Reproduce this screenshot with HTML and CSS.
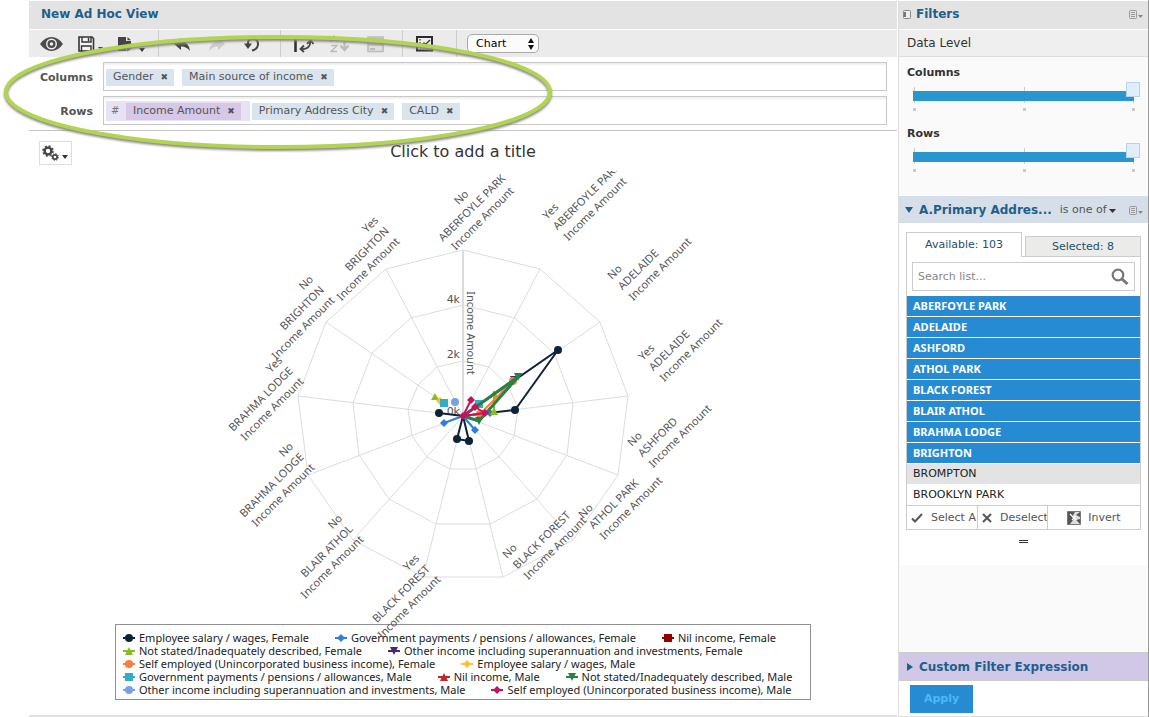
FILE: index.html
```html
<!DOCTYPE html>
<html lang="en">
<head>
<meta charset="utf-8">
<title>New Ad Hoc View</title>
<link rel="stylesheet" href="styles.css">
</head>
<body>
<div class="app">
  <main class="view">
    <h1 class="bar view-title">New Ad Hoc View</h1>
    <div class="toolbar">
      <div class="tools tools-file">
        <button type="button" aria-label="Preview"><svg width="23" height="18" viewBox="0 0 23 18"><path d="M0 9Q5 2 11.500 2T23 9Q18 16 11.500 16T0 9Z" fill="#4a4a4a"/><circle cx="11.500" cy="9" r="5.500" fill="#ededed"/><circle cx="11.500" cy="9" r="4" fill="#4a4a4a"/><circle cx="11.500" cy="9" r="1.800" fill="#ededed"/></svg></button>
        <button type="button" aria-label="Save"><svg width="25" height="18" viewBox="0 0 25 18"><path d="M1 2H14L15.500 3.500V16H1Z" fill="#f4f4f4" stroke="#333" stroke-width="1.600"/><path d="M4 2V7H13V2M10.500 3V6M3.500 16V11H13V16" fill="none" stroke="#333" stroke-width="1.400"/><path d="M20 12H25L22.500 15.500Z" fill="#444"/></svg></button>
        <button type="button" aria-label="Export"><svg width="27" height="18" viewBox="0 0 27 18"><path d="M0 2H8V6H13V10L8 16H0Z" fill="#444"/><path d="M9.500 2L13 5.200H9.500Z" fill="#444"/><path d="M8 17L9 13L14 8L16.500 10.500L11.500 15.500Z" fill="#555" stroke="#eee" stroke-width=".7"/><path d="M21 13H27L24 17Z" fill="#333"/></svg></button>
      </div>
      <div class="tools tools-history">
        <button type="button" aria-label="Undo"><svg width="16" height="18" viewBox="0 0 16 18"><path d="M0 9L7 3V6.500Q15 7 16 16Q12 11 7 11.500V15Z" fill="#444"/></svg></button>
        <button type="button" aria-label="Redo" disabled><svg width="16" height="18" viewBox="0 0 16 18"><path d="M16 9L9 3V6.500Q1 7 0 16Q4 11 9 11.500V15Z" fill="#ccc"/></svg></button>
        <button type="button" aria-label="Revert"><svg width="16" height="18" viewBox="0 0 16 18"><path d="M4 11V8Q4 4 9 4Q14 4 14 9Q14 14 8 15.500" fill="none" stroke="#444" stroke-width="2"/><path d="M0 8.500H8L4 14Z" fill="#444"/></svg></button>
      </div>
      <div class="tools tools-data">
        <button type="button" aria-label="Switch group"><svg width="20" height="18" viewBox="0 0 20 18"><path d="M1.500 3V17" stroke="#333" stroke-width="2.600"/><path d="M5 3H16" stroke="#444" stroke-width="2.400"/><path d="M7 14Q16 15 16.500 6M13 9L16.500 5L19.500 9M10 10.500L6.500 14L10 17" fill="none" stroke="#444" stroke-width="1.800"/></svg></button>
        <button type="button" aria-label="Sort" disabled><svg width="20" height="18" viewBox="0 0 20 18"><path d="M1 7L4 1L7 7M2 5H6M1 10.500H7L1 16.500H7" fill="none" stroke="#bbb" stroke-width="1.500"/><path d="M14.500 4V15M9 4H20M10.500 10.500L14.500 15L18.500 10.500" fill="none" stroke="#bbb" stroke-width="2.200"/></svg></button>
        <button type="button" aria-label="Input controls" disabled><svg width="20" height="18" viewBox="0 0 20 18"><path d="M2 2H17V16.500H2Z" fill="#e0e0e0" stroke="#bbb" stroke-width="1.600"/><path d="M2 4H17M2 9.500H17M4 14H9M9 6H15" stroke="#bbb" stroke-width="1.800"/></svg></button>
      </div>
      <div class="tools tools-options">
        <button type="button" aria-label="Options"><svg width="27" height="18" viewBox="0 0 27 18"><path d="M1 2H16V15.500H1Z" fill="#eee" stroke="#2b2b2b" stroke-width="2"/><path d="M4 4V13H14" fill="none" stroke="#333" stroke-width="1.200" stroke-dasharray="1.500 1.500"/><path d="M5 10L8 8L10 9L14 5" fill="none" stroke="#333" stroke-width="1.300"/><path d="M21 12H27L24 16Z" fill="#333"/></svg></button>
      </div>
      <label class="kind"><select aria-label="View type"><option>Chart</option><option>Table</option><option>Crosstab</option></select><svg class="kind-arrows" width="8" height="12" viewBox="0 0 8 12"><path d="M4 0L7 5H1ZM4 12L1 7H7Z" fill="#111"/></svg></label>
    </div>

    <div class="levels">
      <div class="level">
        <span class="level-name">Columns</span>
        <div class="level-box">
          <span class="token">Gender <button type="button" aria-label="Remove Gender">✖</button></span>
          <span class="token">Main source of income <button type="button" aria-label="Remove Main source of income">✖</button></span>
        </div>
      </div>
      <div class="level">
        <span class="level-name">Rows</span>
        <div class="level-box">
          <span class="measures"><i class="hash">#</i><span class="token token-measure">Income Amount <button type="button" aria-label="Remove Income Amount">✖</button></span></span>
          <span class="token">Primary Address City <button type="button" aria-label="Remove Primary Address City">✖</button></span>
          <span class="token">CALD <button type="button" aria-label="Remove CALD">✖</button></span>
        </div>
      </div>
    </div>

    <section class="canvas">
      <button type="button" class="gear" aria-label="Chart options"><svg width="27" height="18" viewBox="0 0 27 18"><circle cx="6" cy="7" r="3.400" fill="none" stroke="#444" stroke-width="2.400"/><circle cx="6" cy="7" r="5" fill="none" stroke="#444" stroke-width="1.500" stroke-dasharray="2 1.930"/><circle cx="13" cy="13" r="2.200" fill="none" stroke="#444" stroke-width="1.700"/><circle cx="13" cy="13" r="3.400" fill="none" stroke="#444" stroke-width="1" stroke-dasharray="1.330 1.330"/><path d="M20 11H26L23 15Z" fill="#333"/></svg></button>
      <h2 class="chart-title">Click to add a title</h2>
      <svg class="chart" width="640" height="453" viewBox="-320 -245 640 453" role="img" aria-label="Income Amount by city and CALD">
        <defs><clipPath id="plot"><rect x="-320" y="-245" width="640" height="500"/></clipPath></defs>
        <g class="grid">
          <path d="M0-166L77-147L137-94L165-20L155 59L110 124L40 161H-40L-110 124L-155 59L-165-20L-137-94L-77-147Z"/>
          <path d="M0-111L52-98L91-63L110-13L104 39L74 83L27 108H-27L-74 83L-104 39L-110-13L-91-63L-52-98Z"/>
          <path d="M0-55L26-49L45-31L55-7L51 20L36 41L13 53H-13L-36 41L-51 20L-55-7L-45-31L-26-49Z"/>
          <path d="M0 0L77-147M0 0L137-94M0 0L165-20M0 0L155 59M0 0L110 124M0 0L40 161M0 0L-40 161M0 0L-110 124M0 0L-155 59M0 0L-165-20M0 0L-137-94M0 0L-77-147"/>
          <path class="axis" d="M0 0V-166"/>
        </g>
        <g class="ticks"><text x="-3" y="-113">4k</text><text x="-3" y="-58">2k</text><text x="-3" y="-1">0k</text></g>
        <text class="axis-title" transform="translate(4 -83) rotate(90)">Income Amount</text>
        <g class="series">
          <path d="M0 0L95-66L52-6L0 0L6 25L-6 23L0 0L-24-3" stroke="#0d233a"/>
          <g fill="#0d233a"><circle cx="95" cy="-66" r="4"/><circle cx="52" cy="-6" r="4"/><circle cx="6" cy="25" r="4"/><circle cx="-6" cy="23" r="4"/><circle cx="-24" cy="-3" r="4"/></g>
          <path d="M-19 7L0 0L12 14M0 0L27-3" stroke="#2f7ed8"/>
          <path d="M-19 3l4 4l-4 4l-4-4ZM12 10l4 4l-4 4l-4-4ZM27-7l4 4l-4 4l-4-4Z" fill="#2f7ed8"/>
          <path d="M-28-19L-19-13M31-22V-5" stroke="#8bbc21"/>
          <path d="M-28-23l4 7h-8ZM31-26l4 7h-8ZM31-9l4 8h-8Z" fill="#8bbc21"/>
          <path d="M47-40h8l-4 7Z" fill="#492970"/>
          <path d="M0 0L50-35L17-2L0 0" stroke="#f97d3c"/>
          <circle cx="50" cy="-35" r="4" fill="#f97d3c"/><circle cx="17" cy="-2" r="4" fill="#f97d3c"/>
          <path d="M-23-19l4 4l-4 4l-4-4Z" fill="#ffc233"/>
          <path d="M-23-17h8v8h-8ZM12-16h8v8h-8Z" fill="#33acc8"/>
          <path d="M0 0L55-39L16 5L0 0" stroke="#278048" class="thick"/>
          <path d="M51-43h8l-4 8ZM12 1h8l-4 8Z" fill="#278048"/>
          <circle cx="-8" cy="-14" r="4" fill="#77a1e5"/>
          <path d="M0 0L8-16M12-9L22-3L0 0L12-9" stroke="#c31260"/>
          <path d="M8-20l4 4l-4 4l-4-4ZM12-13l4 4l-4 4l-4-4ZM22-7l4 4l-4 4l-4-4ZM0-4l4 4l-4 4l-4-4Z" fill="#c31260"/>
        </g>
        <g class="cats" clip-path="url(#plot)">
          <g class="mid"><text transform="translate(1 -216) rotate(-45)"><tspan x="0">No</tspan><tspan x="0" dy="15">ABERFOYLE PARK</tspan><tspan x="0" dy="15">Income Amount</tspan></text></g>
          <g>
            <text transform="translate(84 -196) rotate(-45)"><tspan x="0">Yes</tspan><tspan x="0" dy="15">ABERFOYLE PARK</tspan><tspan x="0" dy="15">Income Amount</tspan></text>
            <text transform="translate(149 -136) rotate(-45)"><tspan x="0">No</tspan><tspan x="0" dy="15">ADELAIDE</tspan><tspan x="0" dy="15">Income Amount</tspan></text>
            <text transform="translate(180 -55) rotate(-45)"><tspan x="0">Yes</tspan><tspan x="0" dy="15">ADELAIDE</tspan><tspan x="0" dy="15">Income Amount</tspan></text>
            <text transform="translate(169 31) rotate(-45)"><tspan x="0">No</tspan><tspan x="0" dy="15">ASHFORD</tspan><tspan x="0" dy="15">Income Amount</tspan></text>
            <text transform="translate(120 103) rotate(-45)"><tspan x="0">No</tspan><tspan x="0" dy="15">ATHOL PARK</tspan><tspan x="0" dy="15">Income Amount</tspan></text>
            <text transform="translate(44 143) rotate(-45)"><tspan x="0">No</tspan><tspan x="0" dy="15">BLACK FOREST</tspan><tspan x="0" dy="15">Income Amount</tspan></text>
          </g>
          <g class="end">
            <text transform="translate(-43 143) rotate(-45)"><tspan x="0">Yes</tspan><tspan x="0" dy="15">BLACK FOREST</tspan><tspan x="0" dy="15">Income Amount</tspan></text>
            <text transform="translate(-120 103) rotate(-45)"><tspan x="0">No</tspan><tspan x="0" dy="15">BLAIR ATHOL</tspan><tspan x="0" dy="15">Income Amount</tspan></text>
            <text transform="translate(-169 31) rotate(-45)"><tspan x="0">No</tspan><tspan x="0" dy="15">BRAHMA LODGE</tspan><tspan x="0" dy="15">Income Amount</tspan></text>
            <text transform="translate(-180 -55) rotate(-45)"><tspan x="0">Yes</tspan><tspan x="0" dy="15">BRAHMA LODGE</tspan><tspan x="0" dy="15">Income Amount</tspan></text>
            <text transform="translate(-149 -136) rotate(-45)"><tspan x="0">No</tspan><tspan x="0" dy="15">BRIGHTON</tspan><tspan x="0" dy="15">Income Amount</tspan></text>
            <text transform="translate(-84 -195) rotate(-45)"><tspan x="0">Yes</tspan><tspan x="0" dy="15">BRIGHTON</tspan><tspan x="0" dy="15">Income Amount</tspan></text>
          </g>
        </g>
      </svg>
      <ul class="legend">
        <li><svg width="12" height="10" viewBox="0 0 12 10" fill="#0d233a"><path d="M0 4h12v2H0Z"/><circle cx="6" cy="5" r="4"/></svg>Employee salary / wages, Female</li>
        <li><svg width="12" height="10" viewBox="0 0 12 10" fill="#2f7ed8"><path d="M0 4h12v2H0ZM6 1l4 4l-4 4l-4-4Z"/></svg>Government payments / pensions / allowances, Female</li>
        <li><svg width="12" height="10" viewBox="0 0 12 10" fill="#910000"><path d="M0 4h12v2H0ZM2 1h8v8H2Z"/></svg>Nil income, Female</li>
        <li><svg width="12" height="10" viewBox="0 0 12 10" fill="#8bbc21"><path d="M0 4h12v2H0ZM6 1l4 8H2Z"/></svg>Not stated/Inadequately described, Female</li>
        <li><svg width="12" height="10" viewBox="0 0 12 10" fill="#492970"><path d="M0 4h12v2H0ZM2 1h8l-4 8Z"/></svg>Other income including superannuation and investments, Female</li>
        <li><svg width="12" height="10" viewBox="0 0 12 10" fill="#f97d3c"><path d="M0 4h12v2H0Z"/><circle cx="6" cy="5" r="4"/></svg>Self employed (Unincorporated business income), Female</li>
        <li><svg width="12" height="10" viewBox="0 0 12 10" fill="#ffc233"><path d="M0 4h12v2H0ZM6 1l4 4l-4 4l-4-4Z"/></svg>Employee salary / wages, Male</li>
        <li><svg width="12" height="10" viewBox="0 0 12 10" fill="#33acc8"><path d="M0 4h12v2H0ZM2 1h8v8H2Z"/></svg>Government payments / pensions / allowances, Male</li>
        <li><svg width="12" height="10" viewBox="0 0 12 10" fill="#c42525"><path d="M0 4h12v2H0ZM6 1l4 8H2Z"/></svg>Nil income, Male</li>
        <li><svg width="12" height="10" viewBox="0 0 12 10" fill="#278048"><path d="M0 4h12v2H0ZM2 1h8l-4 8Z"/></svg>Not stated/Inadequately described, Male</li>
        <li><svg width="12" height="10" viewBox="0 0 12 10" fill="#77a1e5"><path d="M0 4h12v2H0Z"/><circle cx="6" cy="5" r="4"/></svg>Other income including superannuation and investments, Male</li>
        <li><svg width="12" height="10" viewBox="0 0 12 10" fill="#c31260"><path d="M0 4h12v2H0ZM6 1l4 4l-4 4l-4-4Z"/></svg>Self employed (Unincorporated business income), Male</li>
      </ul>
    </section>
  </main>

  <aside class="filters">
    <div class="bar filters-head">
      <svg width="8" height="9" viewBox="0 0 8 9"><rect x=".5" y=".5" width="7" height="8" rx="1" fill="#eee" stroke="#888"/><path d="M1 2h2v5H1Z" fill="#777"/></svg>
      <h2>Filters</h2>
      <button type="button" class="menu" aria-label="Filter options"><svg width="14" height="9" viewBox="0 0 14 9"><rect x=".5" y=".5" width="7" height="8" rx="1" fill="none" stroke="#999"/><path d="M2 2.500h4M2 4.500h4M2 6.500h4" stroke="#999"/><path d="M9 5h5l-2.500 3Z" fill="#888"/></svg></button>
    </div>
    <h3 class="data-level">Data Level</h3>
    <div class="sliders">
      <label for="lvl-c">Columns</label>
      <input id="lvl-c" type="range" min="0" max="2" value="2">
      <div class="dots"><i></i><i></i><i></i></div>
      <label for="lvl-r">Rows</label>
      <input id="lvl-r" type="range" min="0" max="2" value="2">
      <div class="dots"><i></i><i></i><i></i></div>
    </div>
    <div class="filter-head">
      <svg width="8" height="6" viewBox="0 0 8 6"><path d="M0 0h8L4 6Z" fill="#1f5f8b"/></svg>
      <h3>A.Primary Addres...</h3>
      <button type="button" class="oper">is one of<svg width="7" height="5" viewBox="0 0 7 5"><path d="M0 1h7L3.500 5Z" fill="#333"/></svg></button>
      <button type="button" class="menu" aria-label="Filter menu"><svg width="14" height="9" viewBox="0 0 14 9"><rect x=".5" y=".5" width="7" height="8" rx="1" fill="none" stroke="#999"/><path d="M2 2.500h4M2 4.500h4M2 6.500h4" stroke="#999"/><path d="M9 5h5l-2.500 3Z" fill="#888"/></svg></button>
    </div>
    <div class="filter-body">
      <div class="tabs" role="tablist"><button type="button" role="tab" class="tab tab-on" aria-selected="true">Available: 103</button><button type="button" role="tab" class="tab" aria-selected="false">Selected: 8</button></div>
      <div class="picker">
        <div class="search"><input type="text" placeholder="Search list..." aria-label="Search list"><svg width="18" height="18" viewBox="0 0 18 18"><circle cx="7" cy="7" r="5.300" fill="none" stroke="#777" stroke-width="2.200"/><path d="M11 11l5.500 5" stroke="#777" stroke-width="3"/></svg></div>
        <ul class="cities" role="listbox" aria-label="Cities" aria-multiselectable="true">
          <li class="on" role="option" aria-selected="true">ABERFOYLE PARK</li>
          <li class="on" role="option" aria-selected="true">ADELAIDE</li>
          <li class="on" role="option" aria-selected="true">ASHFORD</li>
          <li class="on" role="option" aria-selected="true">ATHOL PARK</li>
          <li class="on" role="option" aria-selected="true">BLACK FOREST</li>
          <li class="on" role="option" aria-selected="true">BLAIR ATHOL</li>
          <li class="on" role="option" aria-selected="true">BRAHMA LODGE</li>
          <li class="on" role="option" aria-selected="true">BRIGHTON</li>
          <li class="hover" role="option" aria-selected="false">BROMPTON</li>
          <li role="option" aria-selected="false">BROOKLYN PARK</li>
        </ul>
        <div class="bulk">
          <button type="button"><svg width="12" height="10" viewBox="0 0 12 10"><path d="M1 5.500l3 3L11 1" fill="none" stroke="#555" stroke-width="2"/></svg><span>Select A</span></button>
          <button type="button"><svg width="10" height="10" viewBox="0 0 10 10"><path d="M1 1l8 8M9 1l-8 8" stroke="#555" stroke-width="2"/></svg><span>Deselect</span></button>
          <button type="button"><svg width="14" height="14" viewBox="0 0 14 14"><path d="M.5.500h13v13H.5Z" fill="#ddd" stroke="#777"/><path d="M1 1h7L5 6l2 2l-4 5H1Z" fill="#555"/><path d="M3 3l8 8M5 9l4-4" stroke="#fff" stroke-width="1.200" fill="none"/><path d="M9 4l4-3v5ZM9 9l4 4V8Z" fill="#555"/></svg><span>Invert</span></button>
        </div>
      </div>
      <div class="grip"></div>
    </div>
    <div class="spacer"></div>
    <button type="button" class="custom"><svg width="6" height="8" viewBox="0 0 6 8"><path d="M0 0l6 4l-6 4Z" fill="#1f5f8b"/></svg>Custom Filter Expression</button>
    <div class="foot"><button type="button" class="apply">Apply</button></div>
  </aside>

  <svg class="callout" width="560" height="130" viewBox="0 0 560 130"><ellipse cx="278" cy="65" rx="272" ry="55"/></svg>
</div>
</body>
</html>
```
FILE: styles.css
```css
* { box-sizing: border-box; }
body { margin: 0; background: #fff; color: #333; font: 11px/16px Verdana, "DejaVu Sans", sans-serif; }
h1, h2, h3, ul { margin: 0; padding: 0; font-size: 12px; }
ul { list-style: none; font-size: 11px; }
button { border: 0; padding: 0; background: none; font: inherit; color: inherit; display: flex; align-items: center; }
svg { display: block; flex: none; }

.app { position: relative; display: flex; min-height: 100vh; padding: 1px 0 0 29px; border-right: 1px solid #999; }
.view { flex: 1; min-width: 0; display: flex; flex-direction: column; margin-right: 1px; border-bottom: 2px solid #e0e0e0; }
.bar { height: 28px; display: flex; align-items: center; background: #e3e3e3; }
.view-title { padding: 0 12px 2px; color: #1f5f8b; }

.toolbar { display: flex; height: 27px; margin-top: 1px; background: #ebebeb; }
.tools { display: flex; align-items: center; border-right: 1px solid #ccc; }
.tools-file { gap: 15px; padding: 0 13px 0 11px; }
.tools-history { gap: 19px; padding: 0 20px 0 15px; }
.tools-data { gap: 16px; padding: 0 16px 0 13px; }
.tools-options { padding: 0 13px; }
.kind { position: relative; align-self: center; margin-left: 10px; }
.kind select { display: block; width: 72px; height: 19px; padding: 0 8px; appearance: none; border: 1px solid #aaa; border-radius: 5px; background: #fbfbfb; color: #000; font: inherit; }
.kind-arrows { position: absolute; right: 4px; top: 4px; }

.levels { display: flex; flex-direction: column; gap: 5px; padding: 5px 10px; border-bottom: 1px solid #c4c4c4; }
.level { display: flex; gap: 10px; }
.level-name { width: 54px; padding-top: 8px; text-align: right; font-weight: bold; color: #555; }
.level-box { flex: 1; height: 29px; display: flex; align-items: center; gap: 8px; padding: 1px 2px 0; border: 1px solid #c8c8c8; box-shadow: inset 0 2px 2px #f0f0f0; color: #555; }
.token { display: flex; align-items: center; gap: 7px; height: 17px; padding: 0 6px 0 7px; background: #dae4ee; line-height: 18px; white-space: nowrap; }
.token button { font-size: 9px; color: #555; }
.measures { display: flex; height: 20px; align-items: center; padding-right: 9px; background: #e8e2f5; margin-right: -6px; }
.token-measure { background: #d6c8e6; }
.hash { width: 20px; padding-left: 5px; font-size: 10px; color: #777; }

.canvas { position: relative; flex: 1; display: flex; flex-direction: column; align-items: center; padding: 11px 10px 15px; }
.gear { position: absolute; left: 10px; top: 10px; padding: 2px; border: 1px solid #ddd; background: #fff; }
.chart-title { font: 16px/20px "DejaVu Sans", sans-serif; color: #333; }
.chart { margin-top: 9px; overflow: visible; position: relative; z-index: 1; }
.chart text { font: 11px "Noto Sans", sans-serif; fill: #555; }
.grid path { fill: none; stroke: #dcdcdc; }
.grid .axis { stroke-width: 2; }
.chart .ticks text { font: 11px "DejaVu Sans", sans-serif; }
.ticks, .end { text-anchor: end; }
.mid, .axis-title { text-anchor: middle; }
.series path[stroke] { fill: none; stroke-width: 2; stroke-linejoin: round; }
.series path.thick { stroke-width: 3; }
.legend { display: flex; flex-wrap: wrap; gap: 0 26px; width: 696px; max-width: 100%; padding: 6px 7px 3px; border: 1px solid #909090; font: 11px/13px "Noto Sans", sans-serif; color: #222; }
.legend li { display: flex; align-items: center; gap: 4px; white-space: nowrap; }

.filters { flex: none; width: 250px; display: flex; flex-direction: column; border-left: 1px solid #ddd; border-bottom: 1px solid #ddd; background: #fafafa; }
.filters h2, .filters h3 { color: #1f5f8b; }
.filters-head { gap: 5px; padding: 0 5px 2px 4px; }
.menu { margin-left: auto; }
.filters .data-level { height: 28px; padding: 5px 8px; border-bottom: 1px solid #ddd; border-top: 1px solid #fff; background: #efefef; font-weight: normal; color: #333; }
.sliders { display: flex; flex-direction: column; height: 138px; padding: 8px 8px 0; }
.sliders label { font-weight: bold; }
.sliders input { appearance: none; width: 227px; height: 16px; margin: 6px 0 0 6px; background: linear-gradient(#2a96d0, #2a96d0) 0 4px / 221px 10px no-repeat, linear-gradient(#ccc, #ccc) 1px 0 / 1px 16px no-repeat, linear-gradient(#ccc, #ccc) 111px 0 / 1px 16px no-repeat, linear-gradient(#ccc, #ccc) 220px 0 / 1px 16px no-repeat; }
.sliders input::-webkit-slider-thumb { appearance: none; width: 14px; height: 15px; margin-top: -11px; border: 1px solid #b8d4e8; background: #dfeefa; }
.dots { display: flex; justify-content: space-between; width: 222px; height: 23px; margin-left: 6px; padding-top: 5px; }
.dots i { width: 3px; height: 3px; background: #ccc; }

.filter-head { display: flex; align-items: center; height: 28px; padding: 1px 5px 0 6px; border-top: 1px solid #fff; background: #d6dfe9; }
.filter-head h3 { margin-left: 6px; white-space: nowrap; }
.oper { margin-left: 8px; gap: 2px; color: #555; white-space: nowrap; }
.filter-body { padding: 9px 7px 0; height: 342px; background: #fff; }
.tabs { display: flex; align-items: flex-end; }
.tab { flex: 1; justify-content: center; height: 20px; margin-left: 3px; border: 1px solid #ccc; border-bottom: 0; background: #ebebe9; color: #24506e; }
.tab-on { height: 25px; margin: 0 0 -1px; background: #fff; position: relative; }
.picker { border: 1px solid #ccc; }
.search { display: flex; align-items: center; margin: 5px 5px 4px; height: 29px; padding: 0 5px; border: 1px solid #ccc; }
.search input { flex: 1; min-width: 0; border: 0; padding: 0; outline: 0; font: inherit; }
.search input::placeholder { color: #888; }
.cities li { height: 21px; padding: 2px 6px; border-top: 1px solid #fff; color: #222; }
.cities .on { background: #268bd2; color: #fff; font-family: "Noto Sans", sans-serif; font-weight: bold; }
.cities .hover { background: #e3e3e3; }
.bulk { display: grid; grid-template-columns: 70px 70px 1fr; height: 24px; border-top: 1px solid #ccc; color: #555; }
.bulk button { gap: 8px; padding-left: 4px; overflow: hidden; white-space: nowrap; }
.bulk button + button { border-left: 1px solid #ccc; }
.bulk button:last-child { justify-content: center; padding: 0; gap: 7px; }
.grip { width: 9px; height: 3px; margin: 10px auto 0; border: solid #333; border-width: 1px 0; }
.spacer { flex: 1; }
.custom { height: 29px; gap: 6px; padding: 0 8px; border: solid #ccc; border-width: 1px 0; background: #d1c8e8; color: #1f5f8b; font-size: 12px; font-weight: bold; }
.foot { padding: 4px 11px 3px; background: #fff; }
.apply { justify-content: center; width: 63px; height: 28px; background: #268bd2; color: #4db8f8; font-weight: bold; }

.callout { position: absolute; left: 0; top: 27px; pointer-events: none; z-index: 2; }
.callout ellipse { fill: none; stroke: #b3d450; stroke-width: 4; filter: drop-shadow(0 2px 1px #888); }
```
